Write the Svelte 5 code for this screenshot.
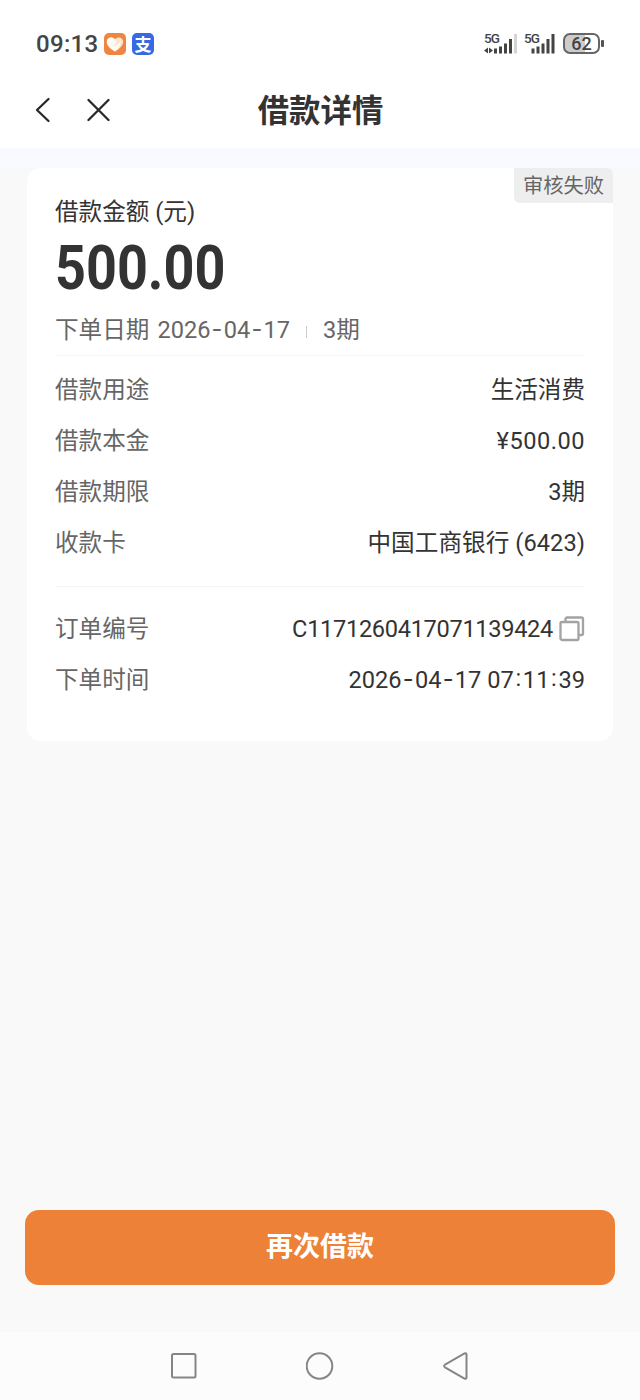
<script>
  const loan = [
    { label: '借款用途', value: '生活消费' },
    { label: '借款本金', value: '¥500.00', spacing: 0.5 },
    { label: '借款期限', value: '3期' },
    { label: '收款卡', value: '中国工商银行 (6423)', spacing: 0.06 }
  ];
  const order = [
    { label: '订单编号', value: 'C1171260417071139424', copy: true, spacing: -0.32 },
    { label: '下单时间', value: '2026-04-17 07:11:39', spacing: 0.04 }
  ];
  const pieces = (text) => text.split(/([-:])/);
</script>

{#snippet digits(text)}{#each pieces(text) as p}{#if p === '-'}<span class="dash">-</span>{:else if p === ':'}<span class="colon">:</span>{:else}{p}{/if}{/each}{/snippet}

{#snippet row(item)}
  <div class="row">
    <span class="label">{item.label}</span>
    <span class="value">
      <span style="letter-spacing: {item.spacing ?? 0}px">{@render digits(item.value)}</span>
      {#if item.copy}
        <svg class="copy" width="26" height="26" viewBox="0 0 26 26" fill="none" stroke="#a3a3a3" stroke-width="2.300">
          <rect x="1.500" y="6" width="18" height="18" rx="1.500" />
          <path d="M6.500 5.500V3a1.500 1.500 0 0 1 1.500-1.500H22.500a1.500 1.500 0 0 1 1.500 1.500V17.500a1.500 1.500 0 0 1-1.500 1.500h-2.500" />
        </svg>
      {/if}
    </span>
  </div>
{/snippet}

<div class="screen">
  <div class="status">
    <span class="time">09:13</span>
    <svg class="app" width="22" height="22" viewBox="0 0 22 22">
      <rect width="22" height="22" rx="5" fill="#ee8543" />
      <path d="M11 18.500C6 15.500 2.800 12.400 2.800 8.800 2.800 4.500 8.200 3 11 6.500c2.800-3.500 8.200-2 8.200 2.300 0 3.600-3.200 6.700-8.200 9.700z" fill="#ffe3c6" />
      <path d="M11 18.500C6 15.500 2.800 12.400 2.800 8.800 2.800 4.500 8.200 3 11 6.500L13 9Q12 12.500 7.500 12.500Q12.500 14 16.500 8Q17 14 11 18.500z" fill="#fffaf2" />
    </svg>
    <span class="pay">支</span>
    <span class="grow"></span>
    <div class="signal first">
      <span>5G</span>
      <svg width="34" height="22" viewBox="0 0 34 22">
        <path d="M0 17.500l4-3v6zM9 17.500l-4-3v6z" fill="#444" />
        <path d="M11.500 15.500v5M16.500 13.500v7M21.500 10.500v10M26.500 6v14.500" stroke="#444" stroke-width="3" />
        <path d="M31.500 1v19.500" stroke="#d4d4d4" stroke-width="3" />
      </svg>
    </div>
    <div class="signal second">
      <span>5G</span>
      <svg width="32" height="22" viewBox="0 0 32 22">
        <path d="M9 15.500v5M14 13.500v7M19 10.500v10M24 6v14.500M29 1v19.500" stroke="#444" stroke-width="3" />
      </svg>
    </div>
    <div class="battery"><span class="cell">62</span><i></i></div>
  </div>

  <header>
    <svg width="16" height="26" viewBox="0 0 16 26" fill="none" stroke="#292929" stroke-width="2.300" stroke-linecap="round" stroke-linejoin="round"><path d="M13.500 2L2 13l11.500 11" /></svg>
    <svg width="24" height="24" viewBox="0 0 24 24" fill="none" stroke="#292929" stroke-width="2.300" stroke-linecap="round"><path d="M2.500 2l20 20M22.500 2L2.500 22" /></svg>
    <h1>借款详情</h1>
  </header>

  <div class="strip"></div>

  <main>
    <section class="card">
      <span class="badge">审核失败</span>
      <div class="caption">借款金额 (元)</div>
      <div class="amount"><span>500.00</span></div>
      <div class="meta">
        <span>下单日期</span><span class="date">{@render digits('2026-04-17')}</span><i></i><span>3期</span>
      </div>
      <hr />
      <div class="group loan">
        {#each loan as item}{@render row(item)}{/each}
      </div>
      <hr />
      <div class="group order">
        {#each order as item}{@render row(item)}{/each}
      </div>
    </section>
    <button>再次借款</button>
  </main>

  <nav>
    <svg width="26" height="28" viewBox="0 0 26 28"><rect x="1" y="2" width="23.500" height="23.500" rx="1.500" /></svg>
    <svg width="28" height="28" viewBox="0 0 28 28"><circle cx="13.500" cy="14" r="12.800" /></svg>
    <svg width="26" height="28" viewBox="0 0 26 28"><path d="M2 12.700 21.500 1.500Q23.500 0.700 23.500 2.600V25.400Q23.500 27.300 21.500 26.500L2 15.300Q0.200 14 2 12.700Z" /></svg>
  </nav>
</div>

<style>
  :global(body) { margin: 0; }
  .screen {
    width: 640px;
    height: 1400px;
    display: flex;
    flex-direction: column;
    overflow: hidden;
    background: #f9f9f9;
    color: #333;
    font-family: Roboto, "Noto Sans CJK SC", sans-serif;
    font-size: 23.600px;
  }
  svg { display: block; flex: none; }
  .status {
    height: 72px;
    box-sizing: border-box;
    padding: 15px 36px 0 36px;
    display: flex;
    align-items: center;
    background: #fff;
    color: #444;
  }
  .time { width: 68px; font-size: 24px; font-weight: 500; letter-spacing: 0.300px; line-height: 26px; }
  .pay {
    width: 22px;
    height: 22px;
    margin-left: 6px;
    border-radius: 5px;
    background: #3769e5;
    color: #fff;
    font: 700 17px/21px "Noto Sans CJK SC", sans-serif;
    text-align: center;
  }
  .grow { flex: 1; }
  .signal { display: grid; }
  .signal > * { grid-area: 1 / 1; }
  .signal span { font-size: 13.500px; line-height: 11px; font-weight: 500; letter-spacing: -0.800px; }
  .signal.second { margin-left: 6px; }
  .battery { display: flex; align-items: center; margin-left: 7px; }
  .cell {
    box-sizing: border-box;
    width: 37px;
    height: 21px;
    border: 2px solid #666;
    border-radius: 7px;
    background: linear-gradient(90deg, #ccc 62%, #fff 62%);
    font-size: 18px;
    font-weight: 500;
    line-height: 17px;
    text-align: center;
  }
  .battery i { width: 3px; height: 7px; margin-left: 1px; border-radius: 1px; background: #555; }
  header {
    height: 76px;
    display: grid;
    grid-template-columns: 16px 24px 1fr;
    column-gap: 35px;
    align-items: center;
    padding-left: 35px;
    background: #fff;
  }
  h1 {
    margin: 3px 0 0 -34px;
    padding-right: 110px;
    box-sizing: border-box;
    font-size: 31.400px;
    line-height: 40px;
    font-weight: 700;
    text-align: center;
  }
  .strip { height: 20px; background: #f9faff; }
  main { flex: 1; display: flex; flex-direction: column; padding: 0 27px; }
  .card {
    position: relative;
    box-sizing: border-box;
    height: 573px;
    padding: 27px 28px 0;
    border-radius: 14px;
    background: #fff;
    display: flex;
    flex-direction: column;
  }
  .badge {
    position: absolute;
    top: 0;
    right: 0;
    width: 99px;
    height: 35px;
    border-radius: 0 6px 0 6px;
    background: #eee;
    color: #666;
    font-size: 20.300px;
    line-height: 36px;
    text-align: center;
  }
  .caption { height: 34px; line-height: 34px; }
  .amount { height: 78px; font-size: 62px; line-height: 77px; font-weight: 700; }
  .amount span { display: inline-block; transform: scaleX(0.870); transform-origin: left; }
  .meta { height: 48px; padding-bottom: 3px; box-sizing: border-box; display: flex; align-items: center; color: #666; line-height: 34px; }
  .date { margin-left: 8px; }
  .meta i { width: 1px; height: 12px; margin: 5px 16px 0 16px; background: #ccc; }
  .dash { position: relative; top: -0.500px; margin: 0 1.200px; font-family: Inter, sans-serif; }
  .colon { position: relative; top: -1.500px; margin: 0 1.600px; }
  hr { width: 100%; height: 1px; margin: 0; border: 0; background: #f4f4f4; flex: none; }
  .group { display: flex; flex-direction: column; }
  .loan { padding: 8px 0 17px; }
  .order { padding-top: 17px; }
  .row { height: 51.200px; display: flex; align-items: center; justify-content: space-between; line-height: 34px; }
  .order .row { height: 50.800px; }
  .label { color: #666; }
  .value { display: flex; align-items: center; white-space: nowrap; }
  .copy { margin-left: 6px; }
  button {
    height: 75px;
    margin: auto -2px 47.500px;
    padding: 0 0 4px;
    border: 0;
    border-radius: 14px;
    background: #ed8137;
    color: #fff;
    font: 700 27px/40px "Noto Sans CJK SC", sans-serif;
  }
  nav {
    height: 68px;
    display: flex;
    justify-content: center;
    align-items: center;
    gap: 109px;
    background: #fcfcfc;
  }
  nav svg { fill: none; stroke: #858585; stroke-width: 2; }
</style>
